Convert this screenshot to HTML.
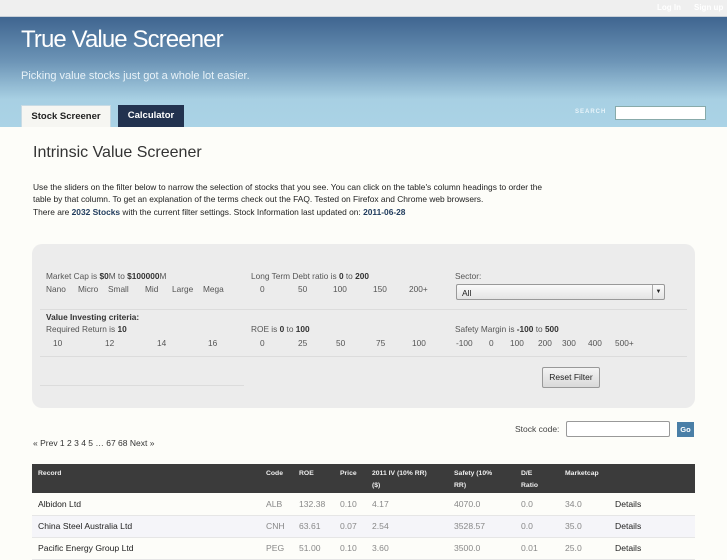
<!DOCTYPE html>
<html><head><meta charset="utf-8"><style>
*{margin:0;padding:0;box-sizing:border-box}
body{width:727px;height:545px;overflow:hidden;background:#fdfdf9;font-family:"Liberation Sans",sans-serif;color:#333;position:relative}
.top{position:absolute;left:0;top:0;width:727px;height:17px;background:#efefef;border-bottom:1px solid #c8d0d8}
.top span{position:absolute;top:3px;font-size:8px;color:#fff;font-weight:bold}
.hdr{position:absolute;left:0;top:17px;width:727px;height:110px;background:linear-gradient(#3f6590 0%,#6c94b6 40%,#a8d0e3 75%,#aad3e6 100%)}
.hdr h1{position:absolute;left:21px;top:9px;font-size:24px;font-weight:normal;color:#fff;letter-spacing:-0.9px}
.hdr p{position:absolute;left:21px;top:53px;font-size:11px;color:#e8f2f8}
.tab{position:absolute;top:105px;height:22px;font-size:9.5px;font-weight:bold;text-align:center;line-height:22px}
.t1{left:21px;width:90px;background:#f6f6f2;color:#222;border:1px solid #c9dbe4;border-bottom:none}
.t2{left:118px;width:66px;background:#22324f;color:#fff;top:105px}
.srch{position:absolute;left:575px;top:109px;font-size:6px;color:#e8f4fa;letter-spacing:1px;font-weight:bold}
.sbox{position:absolute;left:615px;top:106px;width:91px;height:14px;background:#fff;border:1px solid #8aa;}
h2{position:absolute;left:33px;top:144px;font-size:16px;font-weight:normal;color:#333}
.intro{position:absolute;left:33px;top:181px;font-size:8.4px;line-height:12.3px;color:#222;width:526px}
.intro b{color:#1e3a5c}
.panel{position:absolute;left:32px;top:244px;width:663px;height:164px;background:#ececec;border-radius:10px;font-size:8.3px;color:#555}
.panel b{color:#333}
.a{position:absolute;white-space:nowrap}
.hl{position:absolute;height:1px;background:#dcdcdc}
.sel{position:absolute;left:424px;top:40px;width:209px;height:16px;background:linear-gradient(#fafafa,#e4e4e4);border:1px solid #999;border-radius:2px;font-size:8.5px;color:#222;padding:3px 5px}
.sel i{position:absolute;right:0;top:0;width:12px;height:14px;border-left:1px solid #aaa;font-style:normal;font-size:6px;text-align:center;line-height:14px}
.btn{position:absolute;left:510px;top:123px;width:58px;height:21px;background:linear-gradient(#f4f4f4,#d9d9d9);border:1px solid #999;border-radius:2px;font-size:8.5px;color:#222;text-align:center;line-height:19px}
.sc{position:absolute;left:515px;top:424px;font-size:8.5px;color:#444}
.scb{position:absolute;left:566px;top:421px;width:104px;height:16px;background:#fff;border:1px solid #999;border-radius:2px}
.go{position:absolute;left:677px;top:422px;width:17px;height:15px;background:#4a7fa7;color:#fff;font-size:7.5px;font-weight:bold;text-align:center;line-height:15px}
.pg{position:absolute;left:33px;top:438px;font-size:8.5px;color:#333}
table{position:absolute;left:32px;top:464px;width:663px;border-collapse:collapse;font-size:8.6px}
th{background:#3b3b3b;color:#eee;font-size:6.8px;text-align:left;vertical-align:top;padding:4px 6px 0;height:29px;font-weight:bold;line-height:12px}
td{height:22px;padding:0 6px;color:#888;border-bottom:1px solid #e6e6e6}
td.n,td.d{color:#222}
tr.alt td{background:#f5f5f9}
</style></head><body>
<div class="top"><span style="left:657px">Log In</span><span style="left:694px">Sign up</span></div>
<div class="hdr"><h1>True Value Screener</h1><p>Picking value stocks just got a whole lot easier.</p></div>
<div class="tab t1">Stock Screener</div><div class="tab t2">Calculator</div>
<div class="srch">SEARCH</div><div class="sbox"></div>
<h2>Intrinsic Value Screener</h2>
<div class="intro">Use the sliders on the filter below to narrow the selection of stocks that you see. You can click on the table's column headings to order the table by that column. To get an explanation of the terms check out the FAQ. Tested on Firefox and Chrome web browsers.<br>There are <b>2032 Stocks</b> with the current filter settings. Stock Information last updated on: <b>2011-06-28</b></div>
<div class="panel">
<div class="a" style="left:14px;top:27px">Market Cap is <b>$0</b>M to <b>$100000</b>M</div>
<div class="a" style="left:14px;top:40px">Nano</div><div class="a" style="left:46px;top:40px">Micro</div><div class="a" style="left:76px;top:40px">Small</div><div class="a" style="left:113px;top:40px">Mid</div><div class="a" style="left:140px;top:40px">Large</div><div class="a" style="left:171px;top:40px">Mega</div>
<div class="a" style="left:219px;top:27px">Long Term Debt ratio is <b>0</b> to <b>200</b></div>
<div class="a" style="left:228px;top:40px">0</div><div class="a" style="left:266px;top:40px">50</div><div class="a" style="left:301px;top:40px">100</div><div class="a" style="left:341px;top:40px">150</div><div class="a" style="left:377px;top:40px">200+</div>
<div class="a" style="left:423px;top:27px">Sector:</div>
<div class="sel">All<i>▼</i></div>
<div class="hl" style="left:8px;top:65px;width:647px"></div>
<div class="a" style="left:14px;top:68px"><b>Value Investing criteria:</b></div>
<div class="a" style="left:14px;top:80px">Required Return is <b>10</b></div>
<div class="a" style="left:21px;top:94px">10</div><div class="a" style="left:73px;top:94px">12</div><div class="a" style="left:125px;top:94px">14</div><div class="a" style="left:176px;top:94px">16</div>
<div class="a" style="left:219px;top:80px">ROE is <b>0</b> to <b>100</b></div>
<div class="a" style="left:228px;top:94px">0</div><div class="a" style="left:266px;top:94px">25</div><div class="a" style="left:304px;top:94px">50</div><div class="a" style="left:344px;top:94px">75</div><div class="a" style="left:380px;top:94px">100</div>
<div class="a" style="left:423px;top:80px">Safety Margin is <b>-100</b> to <b>500</b></div>
<div class="a" style="left:424px;top:94px">-100</div><div class="a" style="left:457px;top:94px">0</div><div class="a" style="left:478px;top:94px">100</div><div class="a" style="left:506px;top:94px">200</div><div class="a" style="left:530px;top:94px">300</div><div class="a" style="left:556px;top:94px">400</div><div class="a" style="left:583px;top:94px">500+</div>
<div class="hl" style="left:8px;top:112px;width:647px"></div>
<div class="hl" style="left:8px;top:141px;width:204px"></div>
<div class="btn">Reset Filter</div>
</div>
<div class="sc">Stock code:</div><div class="scb"></div><div class="go">Go</div>
<div class="pg">« Prev 1 2 3 4 5 … 67 68 Next »</div>
<table>
<tr><th style="width:228px">Record</th><th style="width:33px">Code</th><th style="width:41px">ROE</th><th style="width:32px">Price</th><th style="width:82px">2011 IV (10% RR)<br>($)</th><th style="width:67px">Safety (10%<br>RR)</th><th style="width:44px">D/E<br>Ratio</th><th style="width:50px">Marketcap</th><th></th></tr>
<tr><td class="n">Albidon Ltd</td><td>ALB</td><td>132.38</td><td>0.10</td><td>4.17</td><td>4070.0</td><td>0.0</td><td>34.0</td><td class="d">Details</td></tr>
<tr class="alt"><td class="n">China Steel Australia Ltd</td><td>CNH</td><td>63.61</td><td>0.07</td><td>2.54</td><td>3528.57</td><td>0.0</td><td>35.0</td><td class="d">Details</td></tr>
<tr><td class="n">Pacific Energy Group Ltd</td><td>PEG</td><td>51.00</td><td>0.10</td><td>3.60</td><td>3500.0</td><td>0.01</td><td>25.0</td><td class="d">Details</td></tr>
</table>
</body></html>
